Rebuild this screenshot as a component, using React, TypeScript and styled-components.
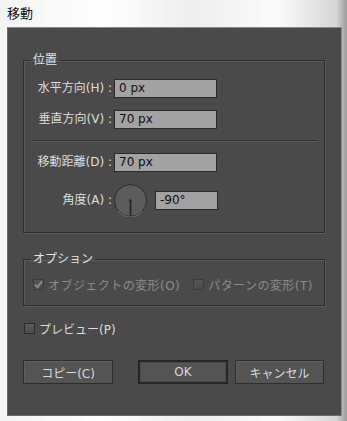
import styled, { createGlobalStyle } from "styled-components";

const GlobalStyle = createGlobalStyle`
  html, body {
    margin: 0;
    padding: 0;
    background: #ffffff;
  }
  body {
    font-family: "DejaVu Sans", "Noto Sans CJK JP", sans-serif;
  }
`;

const Window = styled.div`
  width: 347px;
  height: 421px;
  overflow: hidden;
  background: linear-gradient(
    to right,
    #f3f3f3 0%,
    #ffffff 30%,
    #eeeeee 55%,
    #fbfbfb 80%,
    #d6d6d6 97%,
    #9a9a9a 100%
  );
`;

const TitleBar = styled.div`
  height: 27px;
  display: flex;
  align-items: center;
  padding: 0 0 2px 7px;
  box-sizing: border-box;
  font-size: 13px;
  color: #111;
`;

const Panel = styled.div`
  margin-left: 7px;
  width: 335px;
  height: 389px;
  box-sizing: border-box;
  background: #4a4a4a;
  border: 1px solid #6c6c6c;
  border-top-color: #8a8a8a;
  border-right-color: #8a8a8a;
  padding: 0 16px 0 15px;
  display: flex;
  flex-direction: column;
  color: #dcdcdc;
  font-size: 12px;
`;

const Group = styled.fieldset<{ $top: number }>`
  margin: ${(p) => p.$top}px 0 0 0;
  padding: 12px 0 ${(p) => (p.$top > 20 ? 15 : 14)}px 0;
  border: 1px solid #2c2c2c;
  box-shadow: 1px 1px 0 #5c5c5c, inset 1px 1px 0 #5c5c5c;
  min-width: 0;
`;

const Legend = styled.legend`
  margin-left: 7px;
  padding: 0 2px;
  line-height: 14px;
  font-size: 12px;
  color: #e2e2e2;
`;

const Row = styled.div<{ $gap?: number }>`
  display: flex;
  align-items: center;
  height: 19px;
  padding-left: 9px;
  margin-top: ${(p) => p.$gap ?? 0}px;
`;

const DialRow = styled(Row)`
  height: 33px;
`;

const Label = styled.label`
  width: 79px;
  margin-right: 2px;
  text-align: right;
  white-space: nowrap;
  line-height: 19px;
`;

const Field = styled.div<{ $w: number; $ml?: number }>`
  width: ${(p) => p.$w}px;
  height: 19px;
  margin-left: ${(p) => p.$ml ?? 0}px;
  box-sizing: border-box;
  background: #a2a2a2;
  border: 1px solid #2a2a2a;
  color: #111;
  padding-left: 4px;
  line-height: 17px;
  font-size: 12px;
`;

const Separator = styled.div`
  margin: 11px 6px 11px 8px;
  height: 0;
  border-top: 1px solid #343434;
  border-bottom: 1px solid #5a5a5a;
`;

const DialBox = styled.div`
  width: 33px;
  height: 33px;
`;

const OptionRow = styled.div`
  display: flex;
  align-items: center;
  height: 13px;
  padding-left: 9px;
  color: #8a8a8a;
  letter-spacing: 0.45px;
`;

const Check = styled.span<{ $disabled?: boolean }>`
  width: 11px;
  height: 11px;
  flex: none;
  box-sizing: border-box;
  border: 1px solid ${(p) => (p.$disabled ? "#3c3c3c" : "#2b2b2b")};
  background: ${(p) =>
    p.$disabled
      ? "linear-gradient(#545454, #4a4a4a)"
      : "linear-gradient(#5c5c5c, #4c4c4c)"};
  display: flex;
  align-items: center;
  justify-content: center;
  margin-right: 4px;
`;

const OptionText = styled.span<{ $mr?: number }>`
  white-space: nowrap;
  margin-right: ${(p) => p.$mr ?? 0}px;
`;

const PreviewRow = styled.div`
  display: flex;
  align-items: center;
  height: 12px;
  margin-top: 16px;
  padding-left: 1px;
  color: #dcdcdc;
`;

const Buttons = styled.div`
  display: flex;
  margin-top: 26px;
`;

const Button = styled.button<{ $w: number; $ml?: number; $primary?: boolean }>`
  width: ${(p) => p.$w}px;
  height: 24px;
  margin-left: ${(p) => p.$ml ?? 0}px;
  box-sizing: border-box;
  padding: 0;
  font-family: inherit;
  font-size: 12px;
  color: #d8d8d8;
  background: #545454;
  border: ${(p) => (p.$primary ? "2px solid #262626" : "1px solid #2e2e2e")};
  box-shadow: ${(p) =>
    p.$primary ? "inset 0 0 0 1px #4a4a4a" : "inset 1px 1px 0 #5f5f5f"};
`;

const Dial = () => (
  <DialBox>
    <svg width="33" height="33" viewBox="0 0 33 33">
      <circle cx="16.5" cy="16.5" r="16" fill="#5c5c5c" stroke="#2c2c2c" />
      <path d="M4 27 A16 16 0 0 0 29 27" fill="none" stroke="#6e6e6e" />
      <line x1="16.5" y1="16" x2="16.5" y2="32" stroke="#222" strokeWidth="1.6" />
      <circle cx="16.5" cy="16.5" r="1.3" fill="#2a2a2a" />
    </svg>
  </DialBox>
);

const CheckMark = () => (
  <svg width="9" height="9" viewBox="0 0 9 9">
    <path d="M1 4.6 L3.5 7.2 L8 1.4" fill="none" stroke="#8a8a8a" strokeWidth="2" />
  </svg>
);

export default function App() {
  return (
    <>
      <GlobalStyle />
      <Window>
        <TitleBar>移動</TitleBar>
        <Panel>
          <Group $top={25}>
            <Legend>位置</Legend>
            <Row>
              <Label>水平方向(H) :</Label>
              <Field $w={103}>0 px</Field>
            </Row>
            <Row $gap={12}>
              <Label>垂直方向(V) :</Label>
              <Field $w={103}>70 px</Field>
            </Row>
            <Separator />
            <Row>
              <Label>移動距離(D) :</Label>
              <Field $w={103}>70 px</Field>
            </Row>
            <DialRow $gap={12}>
              <Label>角度(A) :</Label>
              <Dial />
              <Field $w={63} $ml={8}>
                -90°
              </Field>
            </DialRow>
          </Group>
          <Group $top={19}>
            <Legend>オプション</Legend>
            <OptionRow>
              <Check $disabled>
                <CheckMark />
              </Check>
              <OptionText $mr={13}>オブジェクトの変形(O)</OptionText>
              <Check $disabled />
              <OptionText>パターンの変形(T)</OptionText>
            </OptionRow>
          </Group>
          <PreviewRow>
            <Check />
            <OptionText>プレビュー(P)</OptionText>
          </PreviewRow>
          <Buttons>
            <Button $w={90}>コピー(C)</Button>
            <Button $w={90} $ml={25} $primary>
              OK
            </Button>
            <Button $w={89} $ml={7}>
              キャンセル
            </Button>
          </Buttons>
        </Panel>
      </Window>
    </>
  );
}
